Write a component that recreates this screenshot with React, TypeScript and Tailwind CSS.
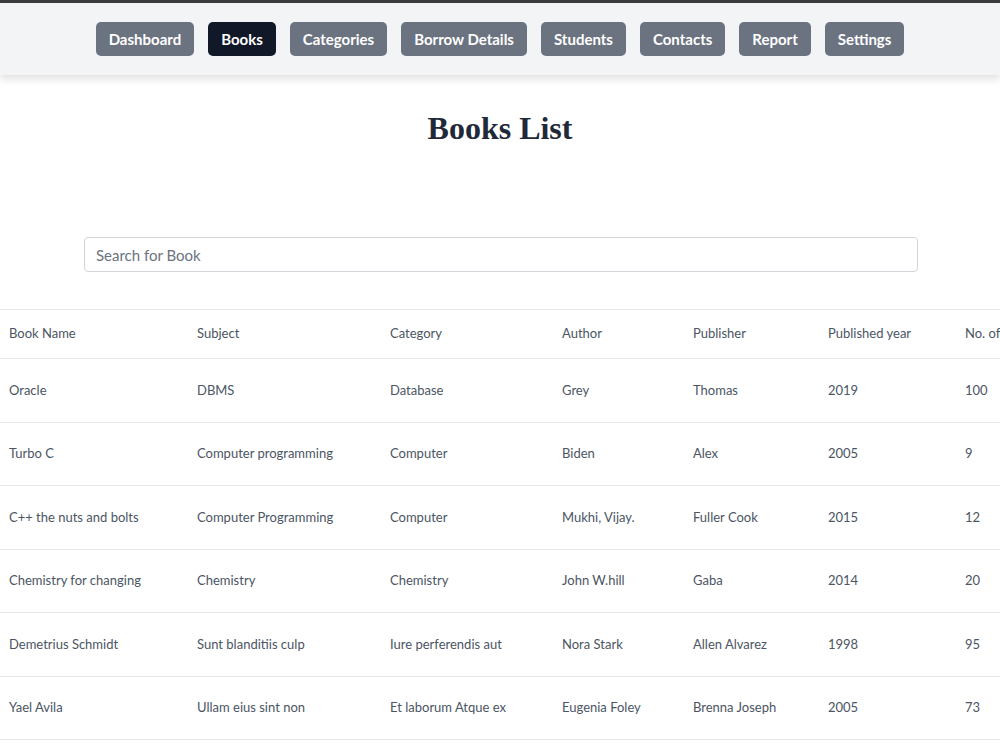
const navItems = ["Dashboard", "Books", "Categories", "Borrow Details", "Students", "Contacts", "Report", "Settings"];

const columns = [
  { label: "Book Name", w: "w-[188px]" },
  { label: "Subject", w: "w-[193px]" },
  { label: "Category", w: "w-[172px]" },
  { label: "Author", w: "w-[131px]" },
  { label: "Publisher", w: "w-[135px]" },
  { label: "Published year", w: "w-[137px]" },
  { label: "No. of copies", w: "w-[120px]" },
];

const books = [
  ["Oracle", "DBMS", "Database", "Grey", "Thomas", "2019", "100"],
  ["Turbo C", "Computer programming", "Computer", "Biden", "Alex", "2005", "9"],
  ["C++ the nuts and bolts", "Computer Programming", "Computer", "Mukhi, Vijay.", "Fuller Cook", "2015", "12"],
  ["Chemistry for changing", "Chemistry", "Chemistry", "John W.hill", "Gaba", "2014", "20"],
  ["Demetrius Schmidt", "Sunt blanditiis culp", "Iure perferendis aut", "Nora Stark", "Allen Alvarez", "1998", "95"],
  ["Yael Avila", "Ullam eius sint non", "Et laborum Atque ex", "Eugenia Foley", "Brenna Joseph", "2005", "73"],
];

const App = () => {
  return (
    <div className="min-h-[750px] w-[1000px] overflow-hidden bg-white font-['Lato','Open_Sans',sans-serif]">
      <nav className="border-t-[3px] border-[#3b3b3b] bg-[#f3f4f6] shadow-[0_4px_8px_rgba(0,0,0,0.12)]">
        <ul className="flex h-[72px] items-center justify-center gap-[14px]">
          {navItems.map((item) => (
            <li key={item}>
              <button
                className={
                  item === "Books"
                    ? "h-[34px] rounded-[5px] bg-[#111827] px-[13px] text-[15px] font-bold text-white"
                    : "h-[34px] rounded-[5px] bg-[#6b7280] px-[13px] text-[15px] font-bold text-white"
                }
              >
                {item}
              </button>
            </li>
          ))}
        </ul>
      </nav>

      <h1 className="mt-[31px] text-center font-['Liberation_Serif','DejaVu_Serif',serif] text-[32px] font-bold leading-[44px] text-[#1f2937]">
        Books List
      </h1>

      <div className="mt-[87px] flex justify-center pl-[2px]">
        <input
          type="text"
          placeholder="Search for Book"
          className="h-[35px] w-[834px] rounded-[4px] border border-[#d1d5db] px-[11px] text-[15px] text-gray-700 placeholder:text-[#6b7280] outline-none"
        />
      </div>

      <div className="mt-[37px] overflow-hidden">
        <table className="w-[1076px] table-fixed border-collapse text-left text-[13px] text-[#4b5563]">
          <thead>
            <tr className="h-[49px] border-y border-[#e5e7eb]">
              {columns.map((c) => (
                <th key={c.label} className={`${c.w} px-[9px] font-normal`}>
                  {c.label}
                </th>
              ))}
            </tr>
          </thead>
          <tbody>
            {books.map((row) => (
              <tr key={row[0]} className="h-[63.5px] border-b border-[#e5e7eb]">
                {row.map((cell, i) => (
                  <td key={i} className="px-[9px]">
                    {cell}
                  </td>
                ))}
              </tr>
            ))}
          </tbody>
        </table>
      </div>
    </div>
  );
};

export default App;
